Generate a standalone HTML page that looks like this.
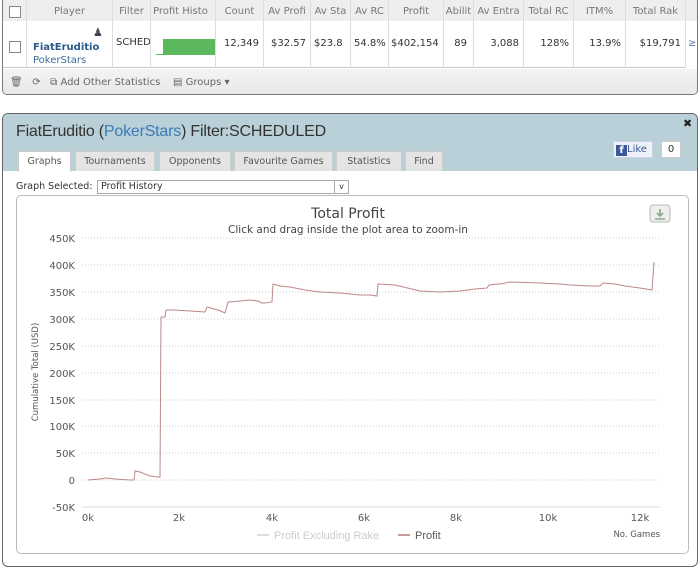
<!DOCTYPE html>
<html><head><style>
*{box-sizing:border-box;margin:0;padding:0}
body{width:700px;height:578px;background:#fff;font-family:"DejaVu Sans","Liberation Sans",sans-serif;position:relative;overflow:hidden;font-size:10px;color:#333}
.abs{position:absolute}
#tbl{left:2px;top:-4px;width:696px;height:99px;border:1px solid #777;border-radius:5px;overflow:hidden;background:#fff}
.hd{position:absolute;top:0;height:24px;background:#eee;border-right:1px solid #ddd;color:#777;font-size:10px;text-align:center;line-height:30px;white-space:nowrap;overflow:hidden}
.dc{position:absolute;top:24px;height:47px;border-right:1px solid #ddd;border-bottom:1px solid #ccc;font-size:10px;line-height:46px;text-align:right;padding-right:4px;white-space:nowrap;overflow:hidden;color:#333}
.cb{position:absolute;width:12px;height:12px;border:1px solid #888;background:#fff}
#pan{left:2px;top:113px;width:696px;height:454px;border:1px solid #666;border-radius:6px;overflow:hidden;background:#fff}
.tab{position:absolute;top:37px;height:20px;background:#e4e4e4;border:1px solid #ccc;border-bottom:none;font-size:9.5px;color:#555;text-align:center;line-height:19px}
</style></head><body>
<div id="tbl" class="abs">
 <div class="hd" style="left:0;width:24px"></div><div class="cb" style="left:6px;top:9px"></div>
 <div class="hd" style="left:24px;width:86px">Player</div>
 <div class="hd" style="left:110px;width:38px">Filter</div>
 <div class="hd" style="left:148px;width:65px;text-align:left;padding-left:2px">Profit Histo</div>
 <div class="hd" style="left:213px;width:48px">Count</div>
 <div class="hd" style="left:261px;width:47px">Av Profi</div>
 <div class="hd" style="left:308px;width:40px">Av Sta</div>
 <div class="hd" style="left:348px;width:38px">Av RC</div>
 <div class="hd" style="left:386px;width:55px">Profit</div>
 <div class="hd" style="left:441px;width:30px">Abilit</div>
 <div class="hd" style="left:471px;width:50px">Av Entra</div>
 <div class="hd" style="left:521px;width:50px">Total RC</div>
 <div class="hd" style="left:571px;width:52px">ITM%</div>
 <div class="hd" style="left:623px;width:60px">Total Rak</div>
 <div class="hd" style="left:683px;width:13px;border:none"></div>
 <div class="dc" style="left:0;width:24px"></div><div class="cb" style="left:6px;top:44px"></div>
 <div class="dc" style="left:24px;width:86px;text-align:left;line-height:13px;padding:20px 0 0 6px"><b style="color:#2a5a8a">FiatEruditio</b><br><span style="color:#3a6a9a">PokerStars</span><span class="abs" style="left:66px;top:5px;font-size:11px;color:#445">♟</span></div>
 <div class="dc" style="left:110px;width:38px;text-align:left;padding-left:3px;line-height:44px">SCHED</div>
 <div class="dc" style="left:148px;width:65px"><div class="abs" style="left:12px;top:18px;width:53px;height:16px;background:#5cb85c"></div><div class="abs" style="left:5px;top:33px;width:8px;height:1px;background:#5cb85c"></div></div>
 <div class="dc" style="left:213px;width:48px">12,349</div>
 <div class="dc" style="left:261px;width:47px">$32.57</div>
 <div class="dc" style="left:308px;width:40px;text-align:left;padding-left:3px">$23.8</div>
 <div class="dc" style="left:348px;width:38px;text-align:left;padding-left:3px">54.8%</div>
 <div class="dc" style="left:386px;width:55px;text-align:left;padding-left:2px">$402,154</div>
 <div class="dc" style="left:441px;width:30px;padding-right:6px">89</div>
 <div class="dc" style="left:471px;width:50px">3,088</div>
 <div class="dc" style="left:521px;width:50px">128%</div>
 <div class="dc" style="left:571px;width:52px">13.9%</div>
 <div class="dc" style="left:623px;width:60px">$19,791</div>
 <div class="dc" style="left:683px;width:13px;border:none;color:#5a7ab0;text-align:left;padding-left:2px">≥</div>
 <div class="abs" style="left:0;top:72px;width:696px;height:26px;background:linear-gradient(#f4f4f4,#e8e8e8);font-size:10px;color:#666;line-height:28px;padding-left:7px">🗑&nbsp;&nbsp; ⟳ &nbsp;&nbsp;⧉ Add Other Statistics &nbsp;&nbsp;&nbsp;▤ Groups ▾</div>
</div>

<div id="pan" class="abs">
 <div class="abs" style="left:0;top:0;width:696px;height:57px;background:#b9d0d8"></div>
 <div class="abs" style="left:13px;top:9px;font-family:'Liberation Sans',sans-serif;font-size:16px;color:#333;letter-spacing:-0.2px">FiatEruditio (<span style="color:#3a7ab8">PokerStars</span>) Filter:SCHEDULED</div>
 <div class="abs" style="left:680px;top:3px;font-size:11px;font-weight:bold;color:#222">✖</div>
 <div class="abs" style="left:610px;top:27px;width:40px;height:17px;background:#eef2f8;border:1px solid #cad4e4;font-size:10px;color:#3b5998;line-height:15px;padding-left:2px"><span style="display:inline-block;width:11px;height:11px;background:#3b5998;color:#fff;font-weight:bold;font-size:10px;line-height:12px;text-align:center;vertical-align:-1px">f</span>Like</div>
 <div class="abs" style="left:658px;top:27px;width:20px;height:17px;background:#fff;border:1px solid #ccc;font-size:10px;line-height:15px;text-align:center">0</div>
 <div class="tab" style="left:15px;width:53px;background:#fff;height:21px">Graphs</div>
 <div class="tab" style="left:72px;width:80px">Tournaments</div>
 <div class="tab" style="left:156px;width:72px">Opponents</div>
 <div class="tab" style="left:231px;width:99px">Favourite Games</div>
 <div class="tab" style="left:333px;width:66px">Statistics</div>
 <div class="tab" style="left:402px;width:38px">Find</div>
 <div class="abs" style="left:13px;top:67px;font-size:9.5px;color:#333">Graph Selected:</div>
 <div class="abs" style="left:94px;top:66px;width:252px;height:14px;border:1px solid #aaa;background:#fff;font-size:9.5px;line-height:12px;padding-left:3px">Profit History<span class="abs" style="right:0;top:0;width:14px;height:12px;border-left:1px solid #aaa;text-align:center;font-size:8px">v</span></div>
 <div class="abs" style="left:13px;top:81px;width:673px;height:359px;border:1px solid #bbb;border-radius:5px"></div>
</div>

<svg class="abs" style="left:0;top:0" width="700" height="578">
 <text x="348" y="218" font-family="DejaVu Sans" font-size="14" fill="#444" text-anchor="middle">Total Profit</text>
 <text x="348" y="233" font-family="DejaVu Sans" font-size="10.5" fill="#444" text-anchor="middle">Click and drag inside the plot area to zoom-in</text>
 <rect x="650" y="205" width="20" height="17" rx="3" fill="#eee" stroke="#bbb"/>
 <path d="M660 209v7M657 213l3 3 3-3M655 219h10" stroke="#8a8" stroke-width="1.6" fill="none"/>
 <g stroke="#ccc" stroke-dasharray="1,2" stroke-width="1">
  <path d="M82 238H660M82 265H660M82 292H660M82 319H660M82 346H660M82 373H660M82 400H660M82 426H660M82 453H660M82 480H660"/>
 </g>
 <path d="M82 507H660" stroke="#ddd"/>
 <g font-family="DejaVu Sans" font-size="10" fill="#555" text-anchor="end">
  <text x="75" y="242">450K</text><text x="75" y="269">400K</text><text x="75" y="296">350K</text><text x="75" y="323">300K</text><text x="75" y="350">250K</text><text x="75" y="377">200K</text><text x="75" y="404">150K</text><text x="75" y="430">100K</text><text x="75" y="457">50K</text><text x="75" y="484">0</text><text x="75" y="511">-50K</text>
 </g>
 <g font-family="DejaVu Sans" font-size="10" fill="#555" text-anchor="middle">
  <text x="88" y="521">0k</text><text x="179" y="521">2k</text><text x="272" y="521">4k</text><text x="364" y="521">6k</text><text x="456" y="521">8k</text><text x="548" y="521">10k</text><text x="640" y="521">12k</text>
 </g>
 <text x="660" y="537" font-family="DejaVu Sans" font-size="8.5" fill="#555" text-anchor="end">No. Games</text>
 <text transform="translate(38 372) rotate(-90)" font-family="DejaVu Sans" font-size="8.5" fill="#555" text-anchor="middle">Cumulative Total (USD)</text>
 <path d="M257 535h12" stroke="#ddd" stroke-width="2"/>
 <text x="274" y="539" font-family="Liberation Sans" font-size="11" fill="#ccc">Profit Excluding Rake</text>
 <path d="M398 535h12" stroke="#c99" stroke-width="2"/>
 <text x="415" y="539" font-family="Liberation Sans" font-size="11" fill="#555">Profit</text>
 <path d="M88 480L100 479L106 478L115 479L130 480L134 480L135 471L140 472L150 476L158 477L160 477L161 317L165 317L166 310L175 310L190 311L205 312L207 307L218 310L225 313L228 302L240 301L250 300L258 301L262 303L265 303L272 302L273 284L280 286L290 287L305 290L320 292L340 293L360 295L370 295L377 296L378 284L395 285L420 291L440 292L460 291L475 289L487 288L489 285L498 284L500 284L510 282L540 283L560 284L570 285L590 286L600 286L603 283L615 284L625 286L640 288L652 290L654 262" fill="none" stroke="#b88" stroke-width="1"/>
</svg>
</body></html>
